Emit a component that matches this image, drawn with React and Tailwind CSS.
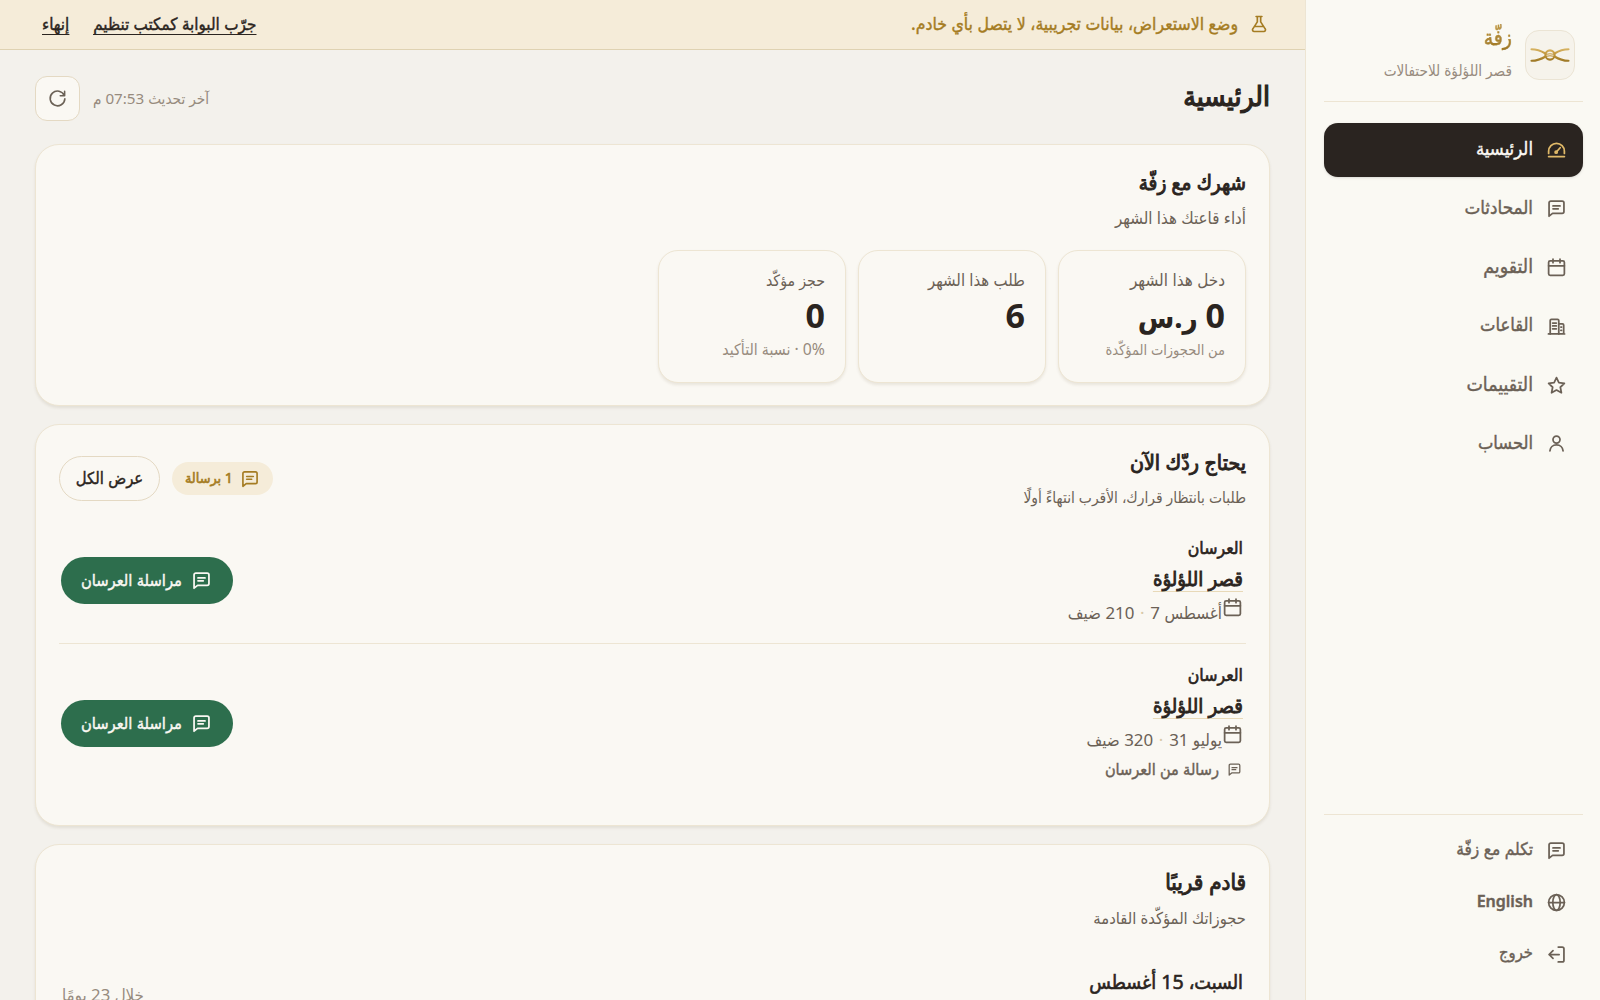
import React from "react";
import clsx from "clsx";

const ICONS = {
  gauge: (
    <>
      <path d="M3 16.5V14a9 9 0 0 1 18 0v2.5" />
      <path d="M3 20h18" />
      <circle cx="11.6" cy="15" r="1.2" />
      <path d="m12.6 14 3.6-4" />
    </>
  ),
  chat: (
    <>
      <path d="M3.5 20.8V5.5a2 2 0 0 1 2-2h13a2 2 0 0 1 2 2v10a2 2 0 0 1-2 2h-11z" />
      <path d="M8 9h8M8 12.3h6" />
    </>
  ),
  calendar: (
    <>
      <rect x="3" y="4.5" width="18" height="16.5" rx="1.8" />
      <path d="M3 10h18M8 2.5v4M16 2.5v4" />
    </>
  ),
  building: (
    <>
      <path d="M4.8 20.5V5.2a1.4 1.4 0 0 1 1.4-1.4h7a1.4 1.4 0 0 1 1.4 1.4v15.3" />
      <path d="M14.6 9h4.2a1.4 1.4 0 0 1 1.4 1.4v10.1M2.8 20.5h18.4" />
      <path d="M7.6 8h4.2M7.6 11.3h4.2M7.6 14.6h4.2M17 12.7h.8M17 16.3h.8" />
    </>
  ),
  star: <path d="m12 3 2.7 5.8 6.3.8-4.6 4.4 1.2 6.3L12 17.2l-5.6 3.1L7.6 14 3 9.6l6.3-.8z" />,
  user: (
    <>
      <circle cx="12" cy="7.5" r="4" />
      <path d="M4.5 20.5c.3-4 3.3-6.8 7.5-6.8s7.2 2.8 7.5 6.8" />
    </>
  ),
  globe: (
    <>
      <circle cx="12" cy="12" r="9" />
      <ellipse cx="12" cy="12" rx="4.2" ry="9" />
      <path d="M3 12h18" />
    </>
  ),
  logout: <path d="M14 3.5h4.5a2 2 0 0 1 2 2v13a2 2 0 0 1-2 2H14M15 12H3.5M8 7.5 3.5 12 8 16.5" />,
  flask: <path d="M8.5 3h7M10 3v6.5L4.6 17.8A2 2 0 0 0 6.3 21h11.4a2 2 0 0 0 1.7-3.2L14 9.5V3M7.5 15h9" />,
  refresh: <path d="M21 3v5.5h-5.5M20.6 8.3A9.3 9.3 0 1 0 21.3 12.5" />,
};

const Icon = ({ name, className }) => (
  <svg
    viewBox="0 0 24 24"
    fill="none"
    stroke="currentColor"
    strokeWidth="2"
    strokeLinecap="round"
    strokeLinejoin="round"
    className={clsx("shrink-0", className)}
  >
    {ICONS[name]}
  </svg>
);

const Logo = () => (
  <div className="flex size-[50px] shrink-0 items-center justify-center rounded-[14px] border border-[#ebe4d4] bg-[#f6f3eb]">
    <svg viewBox="0 0 40 16" className="h-4 w-10" fill="none" strokeWidth="2.1" strokeLinecap="round">
      <defs>
        <linearGradient id="ribbon" x1="0" y1="0" x2="0" y2="16" gradientUnits="userSpaceOnUse">
          <stop offset="0" stopColor="#dfbd70" />
          <stop offset="0.5" stopColor="#bd9238" />
          <stop offset="1" stopColor="#94701f" />
        </linearGradient>
      </defs>
      <g stroke="url(#ribbon)">
        <path d="M1.5 2.2c5.5 0 9.5 1.6 14 4.3M24.5 9.5C29 12.3 33 13.8 38.5 13.8" />
        <path d="M1.5 13.8c5.5 0 9.5-1.5 14-4.3M24.5 6.5C29 3.7 33 2.2 38.5 2.2" />
        <circle cx="20" cy="8" r="4.6" />
        <path d="M16.5 7.2c2-.5 5-.5 7 0M16.5 9.2c2-.5 5-.5 7 0" strokeWidth="1.1" />
      </g>
    </svg>
  </div>
);

const NAV = [
  { icon: "gauge", label: "الرئيسية", size: "text-[18.4px]", active: true },
  { icon: "chat", label: "المحادثات", size: "text-[18.7px]" },
  { icon: "calendar", label: "التقويم", size: "text-[19.4px]" },
  { icon: "building", label: "القاعات", size: "text-[18.2px]" },
  { icon: "star", label: "التقييمات", size: "text-[19.4px]" },
  { icon: "user", label: "الحساب", size: "text-[18.2px]" },
];

const FOOTER_NAV = [
  { icon: "chat", label: "تكلم مع زفّة", size: "text-[17.2px]" },
  { icon: "globe", label: "English", size: "text-[16px] font-semibold" },
  { icon: "logout", label: "خروج", size: "text-[16.4px]" },
];

const NavItem = ({ icon, label, size, active, className }) => (
  <a
    className={clsx(
      "flex items-center gap-[13px] rounded-[14px] pr-4",
      active ? "bg-[#2a2420] text-[#faf8f3] shadow-sm" : "text-[#6b6156]",
      className
    )}
  >
    <Icon name={icon} className={clsx("size-[21px]", active && "text-[#e0b968]")} />
    <span className={clsx("pb-[3px] [-webkit-text-stroke:0.4px]", size)}>{label}</span>
  </a>
);

const Sidebar = () => (
  <aside className="flex w-[295px] shrink-0 flex-col border-l border-[#ede5d3] bg-[#faf9f3] pr-[17px] pl-[18px]">
    <div className="flex h-[102px] items-center gap-[13px] border-b border-[#ede5d3] pt-2 pr-2">
      <Logo />
      <div className="flex flex-col pb-1">
        <span className="h-[34px] bg-linear-to-b from-[#c9a14a] to-[#8f6a1c] bg-clip-text text-[21px] leading-[28px] text-transparent [-webkit-text-stroke:0.3px_#a57c23]">
          زفّة
        </span>
        <span className="h-[26px] text-[15.2px] leading-[26px] text-[#978b7e]">قصر اللؤلؤة للاحتفالات</span>
      </div>
    </div>
    <nav className="flex flex-col gap-[4.9px] pt-[20.5px]">
      {NAV.map((item) => (
        <NavItem key={item.label} {...item} className="h-[54px]" />
      ))}
    </nav>
    <nav className="mt-auto flex h-[186px] flex-col gap-1 border-t border-[#ede5d3] pt-[11px]">
      {FOOTER_NAV.map((item) => (
        <NavItem key={item.label} {...item} className="h-12" />
      ))}
    </nav>
  </aside>
);

const Banner = () => (
  <div className="flex h-[50px] shrink-0 items-center border-b border-[#dfd2b2] bg-[#f5ecd9] pr-[36px] pb-px pl-[42px]">
    <Icon name="flask" className="size-5 text-[#a57c23]" />
    <span className="mr-[11px] pb-px text-[17.5px] text-[#a57c23] [-webkit-text-stroke:0.4px]">
      وضع الاستعراض، بيانات تجريبية، لا يتصل بأي خادم.
    </span>
    <div className="mr-auto flex gap-6 pb-px text-[16.9px] text-[#2a2420] underline underline-offset-4 [-webkit-text-stroke:0.4px]">
      <a>جرّب البوابة كمكتب تنظيم</a>
      <a>إنهاء</a>
    </div>
  </div>
);

const Card = ({ className, children }) => (
  <section
    className={clsx(
      "flex shrink-0 flex-col rounded-[24px] border border-[#ede5d3] bg-[#faf8f3] px-[23px] pt-[23px] shadow-[0_2px_3px_rgba(90,70,30,0.1)]",
      className
    )}
  >
    {children}
  </section>
);

const CardHead = ({ title, titleSize, subtitle, subtitleSize }) => (
  <div>
    <h2 className={clsx("h-[30px] leading-[28px] text-[#2a2420] [-webkit-text-stroke:0.9px]", titleSize)}>{title}</h2>
    <p className={clsx("mt-2 h-6 leading-6 text-[#6b6156]", subtitleSize)}>{subtitle}</p>
  </div>
);

const Stat = ({ label, labelSize, value, valueSuffix, note, noteSize }) => (
  <div className="h-[133px] w-[188px] rounded-[20px] border border-[#ede5d3] bg-[#faf8f3] px-5 pt-4 shadow-[0_2px_3px_rgba(90,70,30,0.1)]">
    <div className={clsx("h-[26px] leading-[26px] text-[#6b6156]", labelSize)}>{label}</div>
    <div className="h-11 text-[34px] leading-[44px] font-bold text-[#2a2420]">
      {value}
      {valueSuffix && <span className="text-[29.5px]"> {valueSuffix}</span>}
    </div>
    <div className={clsx("h-[26px] leading-[25px] text-[#978b7e]", noteSize)}>{note}</div>
  </div>
);

const Request = ({ date, guests, message, className }) => (
  <div className={clsx("flex items-center justify-between pr-[3px] pl-[2px]", className)}>
    <div className="flex h-full flex-col items-start">
      <span className="mt-[15px] h-[31px] text-[17.6px] leading-[31px] text-[#2a2420] [-webkit-text-stroke:0.6px]">العرسان</span>
      <a className="h-[31px] text-[20.2px] leading-[30px] text-[#2a2420] underline decoration-[#e8d9b8] decoration-1 underline-offset-[5px] [-webkit-text-stroke:0.8px]">
        قصر اللؤلؤة
      </a>
      <div className="flex h-[34px] text-[16.9px] leading-[38px] text-[#6b6156]">
        <Icon name="calendar" className="mt-[3px] size-[21px]" />
        <span>{date}</span>
        <span className="w-4 text-center text-[#d8c9a8]">·</span>
        <span>{guests}</span>
      </div>
      {message && (
        <div className="flex h-[28px] items-center gap-2 pr-px text-[16.2px] leading-7 text-[#6b6156] [-webkit-text-stroke:0.4px]">
          <Icon name="chat" className="size-[15px]" />
          <span className="pb-px">{message}</span>
        </div>
      )}
    </div>
    <button className="flex h-[47px] w-[172px] items-center gap-[9px] rounded-full bg-[#2d6e4d] pr-[21px] text-[#faf8f3]">
      <Icon name="chat" className="size-[21px]" />
      <span className="text-[16.4px] [-webkit-text-stroke:0.4px]">مراسلة العرسان</span>
    </button>
  </div>
);

const App = () => (
  <div
    dir="rtl"
    className="flex h-[1000px] w-[1600px] overflow-hidden bg-[#f3f1ec] font-['Noto_Sans','DejaVu_Sans_Condensed','DejaVu_Sans',sans-serif]"
  >
    <Sidebar />
    <main className="flex min-w-0 flex-1 flex-col">
      <Banner />
      <div className="flex flex-col gap-[18px] px-[35px]">
        <header className="flex h-[76px] items-end justify-between">
          <h1 className="h-[56px] text-[28px] leading-[50px] text-[#2a2420] [-webkit-text-stroke:1.2px]">الرئيسية</h1>
          <div className="flex items-center gap-[13px] pb-[5px]">
            <span className="text-[15.2px] text-[#978b7e]">آخر تحديث 07:53 م</span>
            <button className="flex size-[45px] items-center justify-center rounded-xl border border-[#e4d9c3] bg-[#faf8f3] text-[#6b6156]">
              <Icon name="refresh" className="size-[19px]" />
            </button>
          </div>
        </header>

        <Card className="h-[262px]">
          <CardHead title="شهرك مع زفّة" titleSize="text-[20.5px]" subtitle="أداء قاعتك هذا الشهر" subtitleSize="text-[16.8px]" />
          <div className="mt-5 flex gap-3">
            <Stat label="دخل هذا الشهر" labelSize="text-[17px]" value="0" valueSuffix="ر.س" note="من الحجوزات المؤكّدة" noteSize="text-[14.5px]" />
            <Stat label="طلب هذا الشهر" labelSize="text-[16.6px]" value="6" />
            <Stat label="حجز مؤكّد" labelSize="text-[15.8px]" value="0" note="0% · نسبة التأكيد" noteSize="text-[15.8px]" />
          </div>
        </Card>

        <Card className="h-[402px]">
          <div className="flex h-[69px] items-start justify-between">
            <CardHead title="يحتاج ردّك الآن" titleSize="text-[21.2px]" subtitle="طلبات بانتظار قرارك، الأقرب انتهاءً أولًا" subtitleSize="text-[15.4px]" />
            <div className="flex items-center gap-3 pt-2">
              <span className="flex h-[33px] w-[101px] items-center gap-[7px] rounded-full bg-[#f5ecd9] pr-[13px] text-[14.3px] text-[#a57c23] [-webkit-text-stroke:0.6px]">
                <Icon name="chat" className="size-5" />
                <span className="pb-[2px]">1 برسالة</span>
              </span>
              <button className="h-[45px] w-[101px] rounded-full border border-[#e4d9c3] text-[16.5px] text-[#2a2420] [-webkit-text-stroke:0.4px]">
                عرض الكل
              </button>
            </div>
          </div>
          <Request date="أغسطس 7" guests="210 ضيف" className="h-[127px] border-b border-[#ede5d3]" />
          <Request date="يوليو 31" guests="320 ضيف" message="رسالة من العرسان" className="h-[159px]" />
        </Card>

        <Card className="h-[300px]">
          <CardHead title="قادم قريبًا" titleSize="text-[22.2px]" subtitle="حجوزاتك المؤكّدة القادمة" subtitleSize="text-[16.4px]" />
          <div className="mt-[35px] flex justify-between px-[3px]">
            <span className="text-[19.6px] leading-[34px] text-[#2a2420] [-webkit-text-stroke:0.6px]">السبت، 15 أغسطس</span>
            <span className="mt-3 text-[16.8px] leading-9 text-[#978b7e]">خلال 23 يومًا</span>
          </div>
        </Card>
      </div>
    </main>
  </div>
);

export default App;
